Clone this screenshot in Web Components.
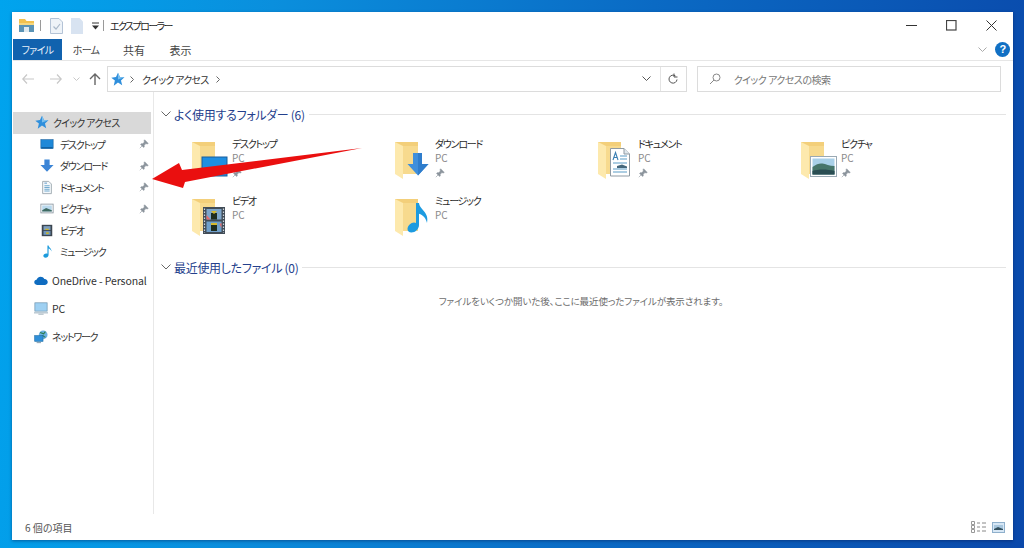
<!DOCTYPE html>
<html lang="ja">
<head>
<meta charset="utf-8">
<title>エクスプローラー</title>
<style>
    html, body{ margin: 0; height: 100%; }
    body{
        width: 1024px; height: 548px; overflow: hidden;
        background: linear-gradient(97deg, #00a4ee 0%, #0a8fdd 25%, #0a6ac4 60%, #0a48aa 100%);
        font-family: "Noto Sans CJK JP", "Noto Sans", sans-serif;
        font-feature-settings: "palt";
    }
</style>
</head>
<body>
<fx-window>
    <fx-titlebar slot="top"></fx-titlebar>
    <fx-ribbon slot="top"></fx-ribbon>
    <fx-navbar slot="top"></fx-navbar>
    <fx-sidebar slot="side">
        <fx-navitem icon="star" top selected>クイック アクセス</fx-navitem>
        <fx-navitem icon="desktop" pinned>デスクトップ</fx-navitem>
        <fx-navitem icon="down" pinned>ダウンロード</fx-navitem>
        <fx-navitem icon="doc" pinned>ドキュメント</fx-navitem>
        <fx-navitem icon="pic" pinned>ピクチャ</fx-navitem>
        <fx-navitem icon="film">ビデオ</fx-navitem>
        <fx-navitem icon="note">ミュージック</fx-navitem>
        <fx-navitem icon="cloud" top gap latin>OneDrive - Personal</fx-navitem>
        <fx-navitem icon="pc" top gap latin>PC</fx-navitem>
        <fx-navitem icon="net" top gap>ネットワーク</fx-navitem>
    </fx-sidebar>
    <fx-group title="よく使用するフォルダー (6)">
        <fx-tile icon="desktop" name="デスクトップ" pinned></fx-tile>
        <fx-tile icon="down" name="ダウンロード" pinned></fx-tile>
        <fx-tile icon="doc" name="ドキュメント" pinned></fx-tile>
        <fx-tile icon="pic" name="ピクチャ" pinned></fx-tile>
        <fx-tile icon="film" name="ビデオ"></fx-tile>
        <fx-tile icon="note" name="ミュージック"></fx-tile>
    </fx-group>
    <fx-group title="最近使用したファイル (0)" empty="ファイルをいくつか開いた後、ここに最近使ったファイルが表示されます。"></fx-group>
    <fx-status slot="bottom">6 個の項目</fx-status>
</fx-window>
<fx-arrow></fx-arrow>

<script>
const _pin = `<svg width="10" height="10" viewBox="0 0 10 10"><path d="M5.6 .8 9.2 4.4 8.3 4.9 6.9 4.6 5.2 6.3 5.2 7.9 4.6 8.4 1.6 5.4 2.1 4.8 3.7 4.8 5.4 3.1 5.1 1.7Z M3 7 .8 9.2" fill="#8b949c" stroke="#8b949c" stroke-width=".6"/></svg>`;

// small glyph set, drawn on a 16 grid
const _glyphs = {
    star: `<path d="M8.5 .8 10.6 5.2 15.4 5.6 11.7 9 13 14.2 8.5 11.3 4 14.6 5.2 9 1.4 6 6.4 5.2Z" fill="#2f8fdc"/><path d="M8.5 .8 10.6 5.2 15.4 5.6 8.5 8Z" fill="#7cc0ee"/>`,
    desktop: `<rect x="1" y="2.5" width="14" height="10" fill="#1e88d8" stroke="#16619f" stroke-width=".7"/><rect x="1.5" y="11" width="13" height="1.5" fill="#0d5c9e"/>`,
    down: `<path d="M5 1h6v6.500h4.500L8 15 .5 7.500H5Z" fill="#3c85d6"/>`,
    doc: `<path d="M3 1h7l3 3v11H3Z" fill="#f4f8fb" stroke="#9aa6ad"/><path d="M5 6h6M5 8h6M5 10h6M5 12h6" stroke="#5f9fc8"/><path d="M5 3h3" stroke="#4f8ec0"/>`,
    pic: `<rect x="1" y="3" width="14" height="10" fill="#fff" stroke="#8d99a3"/><rect x="2.500" y="4.500" width="11" height="7" fill="#b9d8ec"/><path d="M2.500 10 7 7.500 13.500 10v1.500h-11Z" fill="#3f6b63"/>`,
    film: `<rect x="2" y="1.500" width="12" height="13" fill="#3c4650"/><rect x="4" y="3" width="8" height="4.500" fill="#7d9fc0"/><rect x="4" y="8.500" width="8" height="4.500" fill="#6f96bb"/><path d="M6 6h4v1.500H6ZM7 10h3v2H7Z" fill="#c9b430"/>`,
    note: `<path d="M8.500 1h1.300c.3 2.500 3.800 3.200 3.200 7-.4-1.800-1.800-3-3.200-3.300v7.200c0 1.700-1.700 3.100-3.500 3.100-1.600 0-2.500-.9-2.500-2.100 0-1.500 1.600-2.700 3.300-2.700.5 0 .9.100 1.400.3Z" fill="#1c9bdc"/>`,
    cloud: `<path d="M3.500 13C1.500 13 .3 11.700.3 10.100c0-1.500 1.100-2.700 2.600-2.900C3.400 5.100 5.300 3.600 7.500 3.600c1.900 0 3.500 1 4.300 2.600 2.200-.2 3.900 1.500 3.900 3.500 0 1.900-1.500 3.300-3.400 3.300Z" fill="#0f6cc0"/>`,
    pc: `<rect x="1" y="1.500" width="14" height="9.500" fill="#9ed0f2" stroke="#6d93ad" stroke-width=".8"/><path d="M0 12.500h16v1H0Z" fill="#8aa2b2"/><path d="M5 14.500h6" stroke="#a7b6c0" stroke-width="1.200"/>`,
    net: `<circle cx="10.500" cy="6" r="5" fill="#6cb2e0"/><path d="M7 3.500l4 1.500 2-2.500M7 9l3-2 3 2" stroke="#2c7d4c" stroke-width="1.300" fill="none"/><rect x=".8" y="7" width="9.500" height="6.500" fill="#2f8fd8" stroke="#1d6da8" stroke-width=".7"/><path d="M3 15h5" stroke="#8ba0ae" stroke-width="1.200"/>`
};

// overlays for the big folder tiles, on a 36x38 canvas
const _overlays = {
    desktop: `<rect x="10" y="15" width="25" height="19" fill="#1e8fe2"/><rect x="10" y="15" width="25" height="19" fill="none" stroke="#1a5f9c"/>`,
    down: `<path d="M18 11h9v11h6.500L23 33.500 12.500 22H18Z" fill="#3f8fdc"/><path d="M23 11h4v11h6.500L23 33.500Z" fill="#2f7dcc"/>`,
    doc: `<path d="M12.500 6.500H26L31.500 12V34H12.500Z" fill="#fff" stroke="#8f9aa3"/><path d="M26 6.500V12H31.500" fill="#dfe7ec" stroke="#8f9aa3"/><path d="M22 14h7M22 17h7M15 21h14M15 27h14M15 30h14" stroke="#5a9bc6" stroke-width="1.100"/><path d="M15 18 17.500 10.500 20 18M16 15.500h3" fill="none" stroke="#3b7fb3" stroke-width="1.100"/><path d="M19 24l5-1.500 5 2V26H19Z" fill="#44677c"/>`,
    pic: `<rect x="9.500" y="14.500" width="26" height="20" fill="#fff" stroke="#9aa9b4"/><rect x="11.500" y="16.500" width="22" height="16" fill="#a9d0e8"/><path d="M11.500 25c4-3 7-4 10-3.500s7 2.500 12 2.500v8.500h-22Z" fill="#46756a"/><path d="M11.500 29c6-2 14-2 22 0v3.500h-22Z" fill="#2a4d52"/>`,
    film: `<rect x="11" y="8" width="22" height="27" fill="#414c57"/><path d="M12.500 9.500V34M31.500 9.500V34" stroke="#cfd6dc" stroke-width="1.200" stroke-dasharray="1.500 1.500"/><rect x="14.500" y="10" width="15" height="10.500" fill="#7ea6cb"/><rect x="14.500" y="22.500" width="15" height="10.500" fill="#6f9fca"/><path d="M19 14h6v6.500h-6ZM19 26h6v6h-6Z" fill="#1f2d20"/><path d="M19 12l3 3 3-3M19 24h6v2h-6Z" fill="#d5b92e"/><path d="M14.500 16l4 4.500h-4ZM27.500 25l2 4v-5Z" fill="#e56b6b"/>`,
    note: `<path d="M21 4h3c.8 7 10.500 9 8 20-1-5-4-8-8-9.300V26c0 4-3.800 7.500-7.500 7.500-2.500 0-4-1.500-4-3.500 0-3.500 3.500-6.500 6.500-6.500.8 0 1.500.2 2 .5Z" fill="#1d9be0"/>`
};

function _folder(overlay) {
    return `<svg width="36" height="40" viewBox="0 0 36 40">
        <path d="M0 0H23V32H0Z" fill="#f3cf7a"/>
        <path d="M0 0 8 4V37L0 32Z" fill="#fde9ad"/>
        <path d="M8 4H23V32H8Z" fill="#f7da8e"/>
        ${overlay}
    </svg>`;
}

class fxWindow extends HTMLElement{
    constructor() {
        super();
        this.attachShadow({ mode: "open" }).innerHTML = /* html */`
        <style>
            :host{
                display: flex; flex-direction: column;
                width: 1001px; height: 528px;
                margin: 12px 0 0 12px;
                background: #fff;
                box-shadow: 0 1px 3px rgba(0,20,70,.45);
            }
            .main{
                flex: 1; min-height: 0;
                display: grid; grid-template-columns: 142px 1fr;
            }
            .content{ padding: 12px 7px 0 2px; }
        </style>
        <slot name="top"></slot>
        <div class="main">
            <slot name="side"></slot>
            <div class="content"><slot></slot></div>
        </div>
        <slot name="bottom"></slot>`;
    }
}

class fxTitlebar extends HTMLElement{
    constructor() {
        super();
        this.attachShadow({ mode: "open" }).innerHTML = /* html */`
        <style>
            :host{
                display: flex; align-items: center;
                height: 27px; padding-left: 7px;
                color: #222; font-size: 10px;
            }
            .sep{ width: 1px; height: 11px; background: #9a9a9a; }
            svg{ display: block; }
            .title{ margin-left: 6px; letter-spacing: -1.6px; }
            .ctrl{ margin-left: auto; margin-right: 2px; display: flex; }
            .ctrl div{ width: 40px; height: 27px; display: flex; align-items: center; justify-content: center; }
        </style>
        <svg width="15" height="15" viewBox="0 0 15 15" style="margin-right:6px">
            <path d="M0 1h6l1.500 2H15v10H0Z" fill="#f2c14e"/><path d="M0 5h15v9H0Z" fill="#5a93b5"/><path d="M0 5h15v2H0Z" fill="#f5d77f"/><rect x="5" y="9" width="5" height="5" fill="#dfe9ef"/>
        </svg>
        <div class="sep"></div>
        <svg width="13" height="16" viewBox="0 0 13 16" style="margin:0 8px 0 9px">
            <path d="M.5 .5H9L12.500 4V15.500H.5Z" fill="#eef3f8" stroke="#b4c3d6"/><path d="M3.500 8.500 6 11l4-5" fill="none" stroke="#a9b8c9" stroke-width="1.200"/>
        </svg>
        <svg width="12" height="16" viewBox="0 0 12 16" style="margin-right:8px"><path d="M0 0H8.500L12 3.500V16H0Z" fill="#d8e3f1"/></svg>
        <svg width="9" height="8" viewBox="0 0 9 8" style="margin-right:3px"><path d="M1 1h7" stroke="#333" stroke-width="1"/><path d="M1 3.500h7L4.500 7.500Z" fill="#333"/></svg>
        <div class="sep"></div>
        <span class="title">エクスプローラー</span>
        <div class="ctrl">
            <div><svg width="11" height="11"><path d="M0 5.500h11" stroke="#333"/></svg></div>
            <div><svg width="11" height="11"><rect x=".5" y=".5" width="9.500" height="9.500" fill="none" stroke="#444" stroke-width="1.200"/></svg></div>
            <div><svg width="11" height="11"><path d="M.5 .5 10.500 10.500M10.500 .5 .5 10.500" stroke="#333"/></svg></div>
        </div>`;
    }
}

class fxRibbon extends HTMLElement{
    constructor() {
        super();
        this.attachShadow({ mode: "open" }).innerHTML = /* html */`
        <style>
            :host{
                display: flex; align-items: center;
                height: 21px; margin-left: 1px;
                border-bottom: 1px solid #e6e6e6;
                color: #444; font-size: 10px; letter-spacing: -.7px;
            }
            .tab{ height: 100%; display: flex; align-items: center; justify-content: center; width: 48px; }
            .tab.file{ width: 49px; background: #1162ae; color: #e6f0fa; }
            .tab.kanji{ font-size: 11px; letter-spacing: 0; }
            .tail{ margin-left: auto; display: flex; align-items: center; gap: 8px; padding-right: 3px; }
            .help{
                width: 15px; height: 15px; border-radius: 50%;
                background: #1170c4; color: #fff;
                font: bold 11px/15px "Liberation Sans", sans-serif; text-align: center;
            }
        </style>
        <div class="tab file">ファイル</div>
        <div class="tab">ホーム</div>
        <div class="tab kanji">共有</div>
        <div class="tab kanji" style="width:45px">表示</div>
        <div class="tail">
            <svg width="9" height="6"><path d="M.5 .5 4.500 4.500 8.500 .5" fill="none" stroke="#aaa"/></svg>
            <div class="help">?</div>
        </div>`;
    }
}

class fxNavbar extends HTMLElement{
    constructor() {
        super();
        this.attachShadow({ mode: "open" }).innerHTML = /* html */`
        <style>
            :host{
                display: flex; align-items: center;
                height: 26px; margin-top: 5px; padding: 0 12px 0 10px;
                font-size: 10px; color: #333;
            }
            svg{ display: block; flex: none; }
            .box{
                height: 24px; border: 1px solid #dcdcdc;
                display: flex; align-items: center;
            }
            .addr{ width: 577px; margin-left: 6px; padding-left: 2px; }
            .addr .path{ margin: 0 8px 0 7px; letter-spacing: -.75px; }
            .addr .tools{ margin-left: auto; display: flex; align-items: center; height: 100%; }
            .addr .refresh{ width: 25px; height: 100%; border-left: 1px solid #e4e4e4; display: flex; align-items: center; justify-content: center; margin-left: 9px; }
            .search{ width: 292px; margin-left: 10px; padding-left: 11px; color: #777; letter-spacing: -.5px; }
            .search span{ margin-left: 13px; }
        </style>
        <svg width="12" height="10" style="margin-right:16px"><path d="M5 .5.800 5 5 9.500M1 5h11" fill="none" stroke="#c8c8c8" stroke-width="1.200"/></svg>
        <svg width="12" height="10" style="margin-right:11px"><path d="M7 .5 11.200 5 7 9.500M0 5h11" fill="none" stroke="#c8c8c8" stroke-width="1.200"/></svg>
        <svg width="7" height="5" style="margin-right:9px"><path d="M.5 .5 3.500 3.500 6.500 .5" fill="none" stroke="#c8c8c8"/></svg>
        <svg width="12" height="12"><path d="M1 6 6 1l5 5M6 1.500V12" fill="none" stroke="#666" stroke-width="1.400"/></svg>
        <div class="box addr">
            <svg width="15" height="15" viewBox="0 0 16 16">${_glyphs.star}</svg>
            <svg width="5" height="7" style="margin-left:5px"><path d="M.5 .5 3.500 3.500 .5 6.500" fill="none" stroke="#666"/></svg>
            <span class="path">クイック アクセス</span>
            <svg width="5" height="7"><path d="M.5 .5 3.500 3.500 .5 6.500" fill="none" stroke="#666"/></svg>
            <div class="tools">
                <svg width="9" height="6"><path d="M.5 .5 4.500 4.500 8.500 .5" fill="none" stroke="#555"/></svg>
                <div class="refresh"><svg width="12" height="12" viewBox="0 0 12 12"><path d="M10 6.500A4 4 0 1 1 8.500 3" fill="none" stroke="#555"/><path d="M7 .5V4h3.500" fill="none" stroke="#555"/></svg></div>
            </div>
        </div>
        <div class="box search">
            <svg width="12" height="12" viewBox="0 0 12 12"><circle cx="7.500" cy="4.500" r="3.500" fill="none" stroke="#888"/><path d="M5 7 1 11" stroke="#888"/></svg>
            <span>クイック アクセスの検索</span>
        </div>`;
    }
}

class fxSidebar extends HTMLElement{
    constructor() {
        super();
        this.attachShadow({ mode: "open" }).innerHTML = /* html */`
        <style>
            :host{
                display: block;
                padding: 20px 2px 0 1px;
                border-right: 1px solid #e8e8e8;
            }
        </style>
        <slot></slot>`;
    }
}

class fxNavitem extends HTMLElement{
    constructor() {
        super();
        const icon = this.getAttribute("icon");
        const top = this.hasAttribute("top");
        this.attachShadow({ mode: "open" }).innerHTML = /* html */`
        <style>
            :host{
                display: flex; align-items: center;
                height: 21.500px;
                padding-left: ${icon === "star" ? 21 : top ? 21 : 27}px;
                font-size: 10px; color: #333; letter-spacing: -1.250px;
                white-space: nowrap;
            }
            :host([latin]){ font-size: 10.500px; letter-spacing: -.1px; }
            :host([selected]){ background: #d9d9d9; letter-spacing: -.75px; }
            :host([gap]){ margin-top: 6.800px; }
            svg{ flex: none; display: block; }
            .ic{ margin-right: ${top ? 4 : 6}px; }
            .pin{ margin-left: auto; margin-right: 2px; }
        </style>
        <svg class="ic" width="${icon === "star" ? 15 : 14}" height="15" viewBox="0 0 16 16">${_glyphs[icon]}</svg>
        <slot></slot>
        ${this.hasAttribute("pinned") ? `<span class="pin">${_pin}</span>` : ""}`;
    }
}

class fxGroup extends HTMLElement{
    constructor() {
        super();
        const empty = this.getAttribute("empty");
        this.attachShadow({ mode: "open" }).innerHTML = /* html */`
        <style>
            :host{ display: block; }
            .head{
                display: flex; align-items: center; gap: 3px;
                height: 20px; padding-left: 5px;
                color: #24408c; font-size: 12px; letter-spacing: -.3px;
            }
            .head i{ flex: 1; height: 1px; background: #e4e4e4; margin-left: 1px; }
            .grid{
                display: grid; grid-template-columns: repeat(4, 203px);
                grid-auto-rows: 56.500px;
                padding: 13px 0 0 36px;
                margin-bottom: 7px;
            }
            .empty{
                text-align: center; color: #6d6d6d; font-size: 9.500px; letter-spacing: -.1px;
                padding-top: 17px;
            }
        </style>
        <div class="head">
            <svg width="10" height="6"><path d="M.5 .5 5 5 9.500 .5" fill="none" stroke="#666"/></svg>
            <span>${this.getAttribute("title")}</span><i></i>
        </div>
        ${empty ? `<div class="empty">${empty}</div>` : `<div class="grid"><slot></slot></div>`}`;
        this.removeAttribute("title");
    }
}

class fxTile extends HTMLElement{
    constructor() {
        super();
        this.attachShadow({ mode: "open" }).innerHTML = /* html */`
        <style>
            :host{ display: flex; gap: 4px; align-items: flex-start; }
            .fold{ width: 36px; height: 40px; padding-top: 5px; }
            .fold svg{ display: block; }
            .txt{ display: flex; flex-direction: column; font-size: 10px; line-height: 14px; color: #2a2a2a; letter-spacing: -1.250px; }
            .sub{ color: #8a8a8a; letter-spacing: 0; }
            .pin{ display: block; height: 12px; padding-top: 2px; }
        </style>
        <div class="fold">${_folder(_overlays[this.getAttribute("icon")])}</div>
        <div class="txt">
            <span>${this.getAttribute("name")}</span>
            <span class="sub">PC</span>
            ${this.hasAttribute("pinned") ? `<span class="pin">${_pin}</span>` : ""}
        </div>`;
    }
}

class fxStatus extends HTMLElement{
    constructor() {
        super();
        this.attachShadow({ mode: "open" }).innerHTML = /* html */`
        <style>
            :host{
                display: flex; align-items: center;
                height: 26px; padding: 0 8px 0 13px;
                color: #555; font-size: 10px;
            }
            .views{ margin-left: auto; display: flex; gap: 5px; align-items: center; }
            svg{ display: block; }
        </style>
        <slot></slot>
        <div class="views">
            <svg width="16" height="12" viewBox="0 0 16 12"><path d="M.5 .5h3v3h-3ZM.5 4.500h3v3h-3ZM.5 8.500h3v3h-3Z" fill="none" stroke="#999"/><path d="M6 2h3M11 2h4M6 6h3M11 6h4M6 10h3M11 10h4" stroke="#888"/></svg>
            <svg width="13" height="11" viewBox="0 0 13 11"><rect x=".5" y=".5" width="12" height="10" fill="#d7e7f5" stroke="#8fb0cc"/><rect x="2" y="3" width="9" height="5" fill="#a7c6de"/><path d="M2 7l4-2 5 2v1H2Z" fill="#33505e"/></svg>
        </div>`;
    }
}

class fxArrow extends HTMLElement{
    constructor() {
        super();
        this.attachShadow({ mode: "open" }).innerHTML = /* html */`
        <style>
            :host{ position: absolute; left: 150px; top: 145px; display: block; width: 215px; height: 46px; }
            svg{ display: block; }
        </style>
        <svg width="215" height="46" viewBox="150 145 215 46">
            <path d="M152 179 179 163 182 170 362 148 185 182 183 188Z" fill="#ea0f0f"/>
        </svg>`;
    }
}

customElements.define("fx-window", fxWindow);
customElements.define("fx-titlebar", fxTitlebar);
customElements.define("fx-ribbon", fxRibbon);
customElements.define("fx-navbar", fxNavbar);
customElements.define("fx-sidebar", fxSidebar);
customElements.define("fx-navitem", fxNavitem);
customElements.define("fx-group", fxGroup);
customElements.define("fx-tile", fxTile);
customElements.define("fx-status", fxStatus);
customElements.define("fx-arrow", fxArrow);
</script>
</body>
</html>
